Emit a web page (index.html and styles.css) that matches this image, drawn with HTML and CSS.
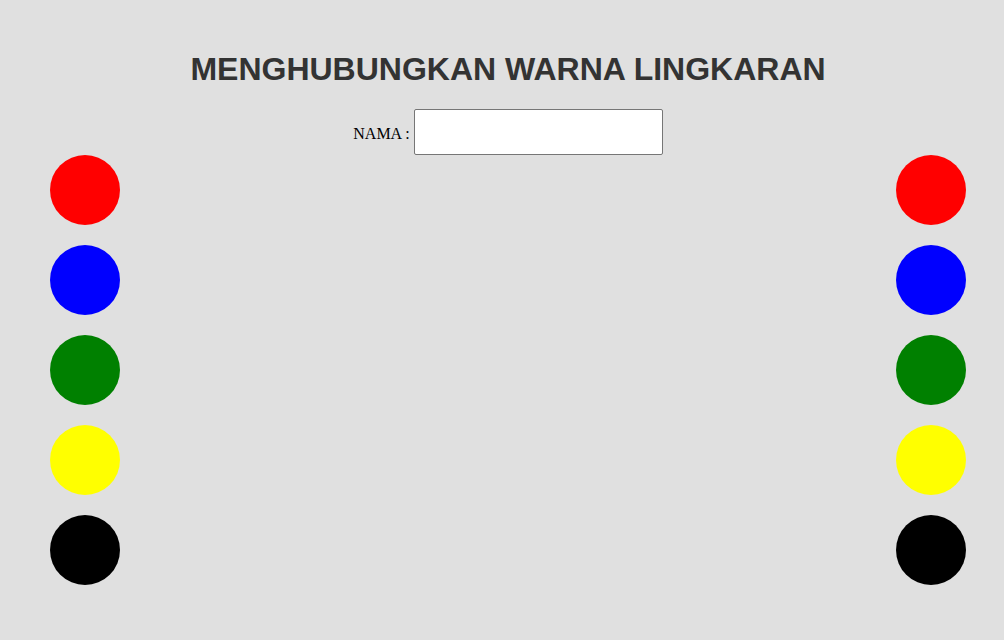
FILE: index.html
```html
<!DOCTYPE html>
<html>
<head>
<meta charset="utf-8">
<link rel="stylesheet" href="styles.css">
</head>
<body>
<div class="page">
  <h1 class="title">MENGHUBUNGKAN WARNA LINGKARAN</h1>
  <div class="form-row">
    <label class="label" for="nama">NAMA :</label>
    <input class="input" id="nama" type="text">
  </div>
  <div class="board">
    <div class="column">
      <div class="circle red"></div>
      <div class="circle blue"></div>
      <div class="circle green"></div>
      <div class="circle yellow"></div>
      <div class="circle black"></div>
    </div>
    <div class="column">
      <div class="circle red"></div>
      <div class="circle blue"></div>
      <div class="circle green"></div>
      <div class="circle yellow"></div>
      <div class="circle black"></div>
    </div>
  </div>
</div>
</body>
</html>
```
FILE: styles.css
```css
html, body {
  margin: 0;
  padding: 0;
  background: #e0e0e0;
}
.page {
  padding: 51px 38px 0 50px;
  display: flex;
  flex-direction: column;
}
.title {
  margin: 0;
  text-align: center;
  font-family: "Liberation Sans", Arial, sans-serif;
  font-weight: bold;
  font-size: 32px;
  line-height: 37px;
  color: #333333;
}
.form-row {
  margin-top: 21px;
  display: flex;
  justify-content: center;
  align-items: center;
  gap: 4px;
}
.label {
  padding-top: 3px;
  font-family: "Liberation Serif", "Times New Roman", serif;
  font-size: 16px;
  color: #000;
}
.input {
  box-sizing: border-box;
  width: 249px;
  height: 46px;
  margin: 0;
  border: 1px solid #767676;
  border-radius: 2px;
  background: #fff;
  padding: 0 8px;
}
.board {
  display: flex;
  justify-content: space-between;
}
.column {
  display: flex;
  flex-direction: column;
  gap: 20px;
}
.circle {
  width: 70px;
  height: 70px;
  border-radius: 50%;
}
.red { background: #ff0000; }
.blue { background: #0000ff; }
.green { background: #008000; }
.yellow { background: #ffff00; }
.black { background: #000000; }
```
